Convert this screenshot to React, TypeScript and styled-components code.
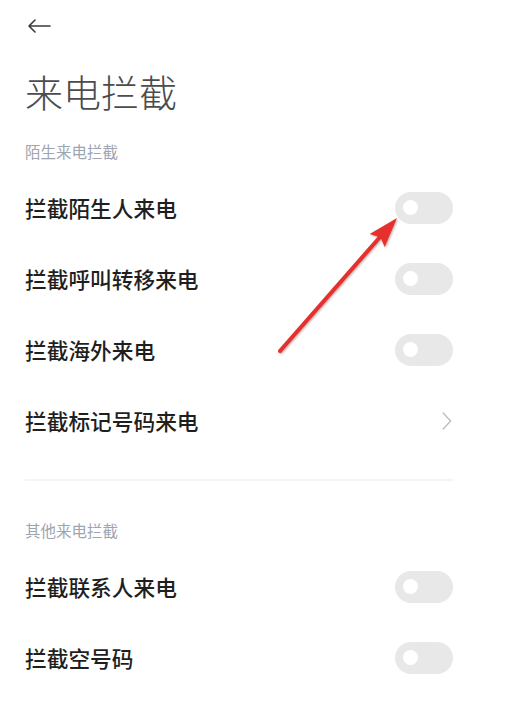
import styled, { createGlobalStyle } from "styled-components";

const GlobalStyle = createGlobalStyle`
  body {
    margin: 0;
    background: #ffffff;
    font-family: "Noto Sans CJK SC", "Noto Sans", sans-serif;
  }
`

const Page = styled.div`
  position: relative;
  width: 530px;
  height: 707px;
  padding: 0 77px 0 25px;
  box-sizing: border-box;
  overflow: hidden;
`

const Header = styled.div`
  height: 52px;
  display: flex;
  align-items: center;
  padding-left: 2px;
`

const BackButton = styled.button`
  border: none;
  background: none;
  padding: 0;
  display: flex;
  align-items: center;
  cursor: pointer;
`

const Title = styled.h1`
  margin: 20px 0 0;
  font-size: 38px;
  line-height: 38px;
  font-weight: 300;
  color: #4c4c4c;
`

const SectionTitle = styled.div<{ $top: number }>`
  margin-top: ${p => p.$top}px;
  font-size: 15.5px;
  line-height: 20px;
  color: #9ea4b0;
  margin-bottom: 11px;
`

const List = styled.div`
  display: flex;
  flex-direction: column;
`

const Row = styled.div`
  height: 71px;
  display: flex;
  align-items: center;
  justify-content: space-between;
`

const Label = styled.span`
  font-size: 21.7px;
  font-weight: 500;
  color: #1f1f1f;
`

const Toggle = styled.div`
  width: 58px;
  height: 32px;
  border-radius: 16px;
  background: #e8e8e8;
  display: flex;
  align-items: center;
  padding-left: 8px;
  box-sizing: border-box;
`

const Knob = styled.span`
  width: 15px;
  height: 15px;
  border-radius: 50%;
  background: #ffffff;
`

const Divider = styled.hr`
  margin: 23px 0 0;
  border: none;
  height: 2px;
  background: #f4f4f4;
`

const Pointer = styled.svg`
  position: absolute;
  left: 270px;
  top: 208px;
  filter: drop-shadow(1px 1px 1px rgba(80, 0, 0, 0.35));
`

function Switch() {
  return (
    <Toggle>
      <Knob />
    </Toggle>
  )
}

function Chevron() {
  return (
    <svg width="10" height="18" viewBox="0 0 10 18" style={{ marginRight: 1 }}>
      <path d="M1.2 1 L8.6 9 L1.2 17" fill="none" stroke="#bdbdbd" strokeWidth="1.4" strokeLinecap="round" strokeLinejoin="round" />
    </svg>
  )
}

const strangerItems = ["拦截陌生人来电", "拦截呼叫转移来电", "拦截海外来电"]
const otherItems = ["拦截联系人来电", "拦截空号码"]

export default function App() {
  return (
    <Page>
      <GlobalStyle />
      <Header>
        <BackButton aria-label="返回">
          <svg width="24" height="14" viewBox="0 0 24 14">
            <path d="M23 7 H2 M8 1 L2 7 L8 13" fill="none" stroke="#3a3a3a" strokeWidth="1.6" strokeLinecap="round" strokeLinejoin="round" />
          </svg>
        </BackButton>
      </Header>
      <Title>来电拦截</Title>

      <SectionTitle $top={31}>陌生来电拦截</SectionTitle>
      <List>
        {strangerItems.map(item => (
          <Row key={item}>
            <Label>{item}</Label>
            <Switch />
          </Row>
        ))}
        <Row>
          <Label>拦截标记号码来电</Label>
          <Chevron />
        </Row>
      </List>
      <Divider />

      <SectionTitle $top={39}>其他来电拦截</SectionTitle>
      <List>
        {otherItems.map(item => (
          <Row key={item}>
            <Label>{item}</Label>
            <Switch />
          </Row>
        ))}
      </List>

      <Pointer width="140" height="150" viewBox="0 0 140 150">
        <path d="M10 143 L110 29" stroke="#e5302e" strokeWidth="4" strokeLinecap="round" />
        <path d="M127 10 L114.7 39.1 L110.5 29.5 L99.7 25.9 Z" fill="#e5302e" />
      </Pointer>
    </Page>
  )
}
